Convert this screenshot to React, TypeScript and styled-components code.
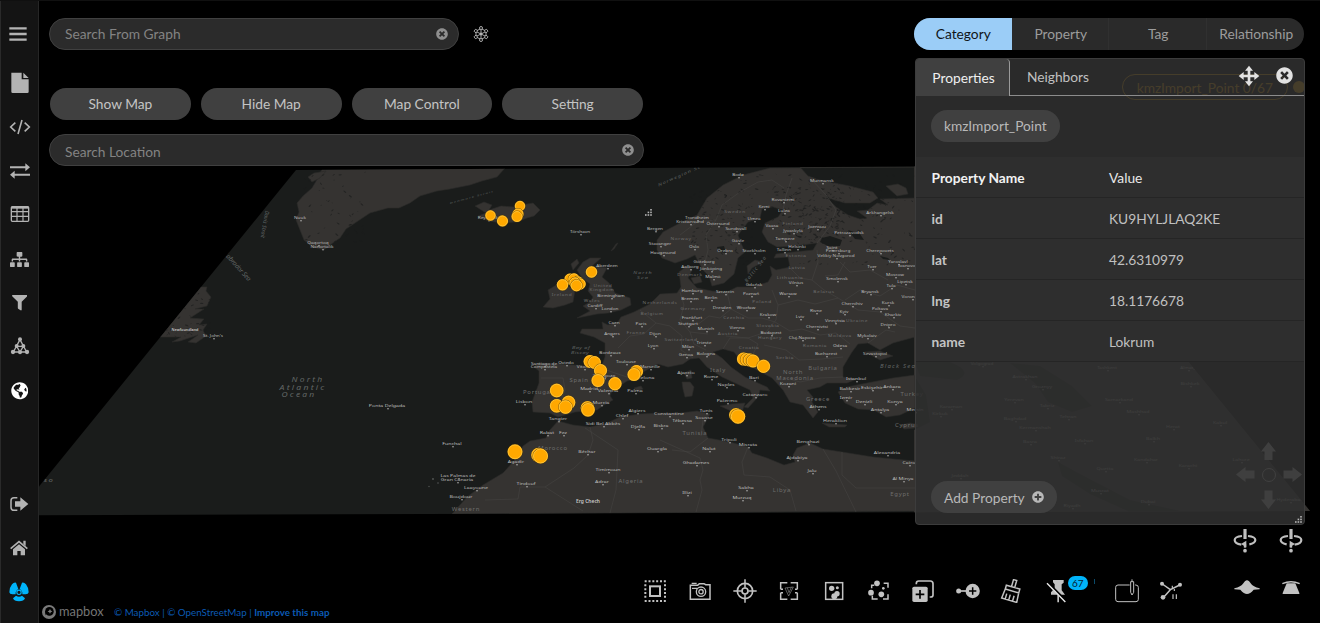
import React from 'react';
import styled, { createGlobalStyle } from 'styled-components';
import { FaSitemap, FaFilter, FaGlobeAmericas, FaTimesCircle, FaPlusCircle } from 'react-icons/fa';

const GlobalStyle = createGlobalStyle`
  * { box-sizing: border-box; }
  body { margin: 0; background: #000; font-family: Lato, 'Liberation Sans', sans-serif; font-size: 13.75px; color: #bfbfbf; overflow: hidden; }
  svg { display: block; flex: none; }
`;

const Page = styled.div`
  position: relative;
  display: flex;
  width: 1320px;
  height: 623px;
  overflow: hidden;
  background: #000;
  border-top: 1px solid #101010;
`;

const Sidebar = styled.nav`
  position: relative;
  width: 39px;
  flex: none;
  display: flex;
  flex-direction: column;
  align-items: center;
  padding: 11px 0 9px 0;
  background: #141414;
  border-left: 1px solid #2a2a2a;
  border-right: 1px solid #262626;
`;

const SideItem = styled.a<{ $color?: string; $after?: number; $shift?: number }>`
  width: 36px;
  height: 44px;
  flex: none;
  display: grid;
  place-items: center;
  color: ${p => p.$color ?? '#b3b3b3'};
  margin-bottom: ${p => p.$after ?? 0}px;
  padding-right: ${p => p.$shift ?? 0}px;
`;

const Spacer = styled.div`
  flex: 1;
`;

const Main = styled.main`
  position: relative;
  flex: 1;
  min-width: 0;
  display: flex;
  flex-direction: column;
`;

const Overlay = styled.div`
  position: relative;
  display: flex;
  justify-content: space-between;
  padding: 17px 15px 0 10px;
  height: 524px;
`;

const LeftTools = styled.div`
  width: 595px;
  display: flex;
  flex-direction: column;
`;

const SearchRow = styled.div`
  display: flex;
  align-items: center;
  gap: 10px;
`;

const SearchBox = styled.div<{ $width: number; $drop?: number }>`
  width: ${p => p.$width}px;
  height: 32px;
  display: flex;
  align-items: center;
  justify-content: space-between;
  padding: 0 ${p => (p.$drop ? 9 : 10)}px 1px 15px;
  border: 1px solid #404040;
  border-radius: 16px;
  background: #2b2b2b;
  color: #838383;

  span { padding-top: ${p => p.$drop ?? 0}px; }
`;

const ButtonRow = styled.div`
  display: grid;
  grid-template-columns: repeat(4, 1fr);
  gap: 10px;
  padding: 0 1px;
  margin: 38px 0 14px;
`;

const PillButton = styled.button`
  height: 32px;
  border: 0;
  border-radius: 16px;
  background: #404040;
  color: #c4c4c4;
  font: inherit;
  padding: 0 0 1px;
`;

const RightTools = styled.div`
  position: relative;
  width: 391px;
  display: flex;
  flex-direction: column;
  gap: 8px;
`;

const Segments = styled.div`
  display: grid;
  grid-template-columns: repeat(4, 1fr);
  width: 390px;
  height: 32px;
  border-radius: 16px;
  overflow: hidden;
  background: #2a2a2a;
`;

const Segment = styled.div<{ $active?: boolean }>`
  display: grid;
  place-items: center;
  padding-left: 2px;
  background: ${p => (p.$active ? '#9bcdf7' : 'transparent')};
  color: ${p => (p.$active ? '#101418' : '#9c9c9c')};
  border-right: 1px solid ${p => (p.$active ? '#9bcdf7' : '#303030')};
  &:last-child { border-right: 0; }
`;

const Panel = styled.section`
  position: relative;
  margin-left: 1px;
  width: 390px;
  height: 468px;
  display: flex;
  flex-direction: column;
  border: 1px solid #3c3c3c;
  border-radius: 4px;
  background: rgba(47, 47, 47, 0.895);
`;

const PanelHead = styled.div`
  display: flex;
  height: 37px;
`;

const PanelTab = styled.div<{ $active?: boolean }>`
  width: 94px;
  display: grid;
  place-items: center;
  color: ${p => (p.$active ? '#efefef' : '#c0c0c0')};
  background: ${p => (p.$active ? '#404040' : 'transparent')};
  border-right: ${p => (p.$active ? '1px solid #9a9a9a' : '0')};
  border-bottom: ${p => (p.$active ? '0' : '1px solid #8c8c8c')};
  border-radius: ${p => (p.$active ? '3px 4px 0 0' : '0')};
  padding-left: 2px;
`;

const PanelActions = styled.div`
  flex: 1;
  display: flex;
  align-items: center;
  justify-content: flex-end;
  gap: 14.5px;
  padding: 0 11.5px 2px 0;
  color: #e2e2e2;
  border-bottom: 1px solid #8c8c8c;
`;

const ChipArea = styled.div`
  height: 61px;
  padding: 14px 15px 0;
`;

const Chip = styled.span`
  display: inline-flex;
  align-items: center;
  gap: 7px;
  height: 32px;
  padding: 0 13px;
  border-radius: 16px;
  background: #404040;
  color: #b8b8b8;
`;

const PropRow = styled.div<{ $head?: boolean }>`
  display: grid;
  grid-template-columns: 177.5px 1fr;
  align-items: center;
  height: 41px;
  padding: 1px 0 0 15.5px;
  background: #2e2e2e;
  border-bottom: 1px solid #252525;
  color: ${p => (p.$head ? '#e8e8e8' : '#c0c0c0')};

  b { color: ${p => (p.$head ? '#f2f2f2' : '#c4c4c4')}; }
`;

const PanelFoot = styled.div`
  margin-top: auto;
  padding: 0 15px 11px;
`;

const Grip = styled.svg`
  position: absolute;
  right: 1px;
  bottom: 0;
`;

const Legend = styled.div`
  position: absolute;
  right: 0;
  top: 56px;
  display: flex;
  align-items: center;
  gap: 5px;
  color: #ffb300;
`;

const LegendPill = styled.div`
  height: 26px;
  padding: 0 14px;
  display: flex;
  align-items: center;
  border: 1px solid #ffb300;
  border-radius: 13px;
`;

const LegendDot = styled.i`
  width: 12px;
  height: 12px;
  border-radius: 50%;
  background: #ffb300;
`;

const Orbit = styled.div`
  position: relative;
  display: flex;
  justify-content: flex-end;
  gap: 22px;
  padding: 4px 17px 0 0;
  height: 44px;
`;

const BottomBar = styled.div`
  position: relative;
  flex: 1;
  display: flex;
  align-items: flex-start;
  justify-content: space-between;
`;

const Credits = styled.div`
  display: flex;
  align-items: center;
  padding: 35px 0 0 3px;
  font-size: 9.8px;
  color: #0b5ab4;
`;

const MapboxMark = styled.div`
  display: flex;
  align-items: center;
  gap: 3px;
  width: 72px;
  color: #757575;
  font-size: 12.8px;
  line-height: 14px;

  span { padding-bottom: 2px; }
`;

const Attribution = styled.div`
  padding-bottom: 0;
  line-height: 14px;
  white-space: nowrap;
`;

const Toolbar = styled.div`
  display: flex;
  padding-right: 6.5px;
`;

const Tool = styled.div<{ $before?: number }>`
  position: relative;
  width: 44.65px;
  height: 44px;
  display: grid;
  place-items: center;
  margin-left: ${p => p.$before ?? 0}px;
  color: #c2c2c2;
`;

const Badge = styled.span`
  position: absolute;
  left: 33px;
  top: 7px;
  width: 20px;
  height: 14px;
  display: grid;
  place-items: center;
  border-radius: 7px;
  background: #00b4fa;
  color: #06212e;
  font-size: 10px;
  line-height: 14px;
`;

const MapCanvas = styled.svg`
  position: absolute;
  left: 0;
  top: -1px;
`;

/* ---------- icons: 24px wide, drawn on a 72 unit grid around the centre ---------- */

const Icon = ({ children, size = 24 }: { children: React.ReactNode; size?: number }) => (
  <svg width={size} height={size} viewBox="-36 -36 72 72" fill="none" stroke="currentColor" strokeWidth="5">
    {children}
  </svg>
);

const MenuIcon = () => <Icon><path d="M-26-17H26M-26 0H26M-26 17H26" strokeWidth="7" /></Icon>;
const FileIcon = () => (
  <Icon><path d="M-26-31H5V-11H26V26Q26 30 22 30H-22Q-26 30-26 26ZM10-31 26-15H10Z" fill="currentColor" stroke="none" /></Icon>
);
const CodeIcon = () => <Icon><path d="M-14-13-28 0-14 13M14-13 28 0 14 13M6-21-6 21" strokeWidth="4.8" /></Icon>;
const SwapIcon = () => (
  <Icon>
    <path d="M-30-11H18M-18 11H30" strokeWidth="6" />
    <path d="M16-23 30-11 16 1ZM-16-1-30 11-16 23Z" fill="currentColor" stroke="none" />
  </Icon>
);
const TableIcon = () => (
  <Icon>
    <g transform="translate(0 -3)">
      <rect x="-26" y="-22" width="52" height="44" rx="3" strokeWidth="4" />
      <path d="M-26-19H26" strokeWidth="6" />
      <path d="M-26-7H26M-26 7H26M-9-22V22M9-22V22" strokeWidth="3.5" />
    </g>
  </Icon>
);
const MeshIcon = () => (
  <Icon>
    <g transform="translate(0 -4)">
      <path d="M0-18-20 19H20ZM-10 2H10L0 19Z" strokeWidth="4" />
      <g fill="currentColor" stroke="none">
        <circle cy="-19" r="6" /><circle cx="-21" cy="19" r="6.5" /><circle cx="21" cy="19" r="6.5" />
        <circle cy="20" r="6" /><circle cx="-10" cy="1" r="6" /><circle cx="10" cy="1" r="6" />
      </g>
    </g>
  </Icon>
);
const ExitIcon = () => (
  <Icon>
    <path d="M-5-19H-15Q-24-19-24-10V10Q-24 19-15 19H-5" strokeWidth="4.5" />
    <path d="M-12-8H4V-20L28 0 4 20V8H-12Z" fill="currentColor" stroke="none" />
  </Icon>
);
const HomeIcon = () => (
  <Icon>
    <path d="M-25 2 0-19 25 2" strokeWidth="5" />
    <path d="M13-22H20V-6L13-12ZM-18 4 0-11 18 4V22H5V9H-5V22H-18Z" fill="currentColor" stroke="none" />
  </Icon>
);
const PropellerIcon = () => (
  <Icon>
    <g fill="currentColor" stroke="none">
      <path d="M-2-9-9-28Q-15-30-21-23Q-29-13-29 1Q-28 7-20 7H-10Q-11-4-2-9Z" />
      <path d="M2-9 9-28Q15-30 21-23Q29-13 29 1Q28 7 20 7H10Q11-4 2-9Z" />
      <path d="M-9 11-18 19Q-15 28 0 28Q15 28 18 19L9 11Q0 17-9 11Z" />
    </g>
    <circle cy="1" r="6.5" strokeWidth="3.5" />
  </Icon>
);
const AtomIcon = () => (
  <Icon>
    <g strokeWidth="2.6">
      <path d="M0-13V13M-12-6 12 6M12-6-12 6" />
      <path d="M0-16 15-9V9L0 16-15 9V-9Z" />
      <circle r="3" />
      {[0, 60, 120, 180, 240, 300].map(a => <circle key={a} cy="-18" r="4.500" fill="#000" transform={`rotate(${a})`} />)}
    </g>
  </Icon>
);
const MoveIcon = () => (
  <Icon>
    <path d="M0-20V20M-20 0H20" strokeWidth="8" />
    <path d="M0-31 12-16H-12ZM0 31 12 16H-12ZM-31 0-16-12V12ZM31 0 16-12V12Z" fill="currentColor" stroke="none" />
  </Icon>
);
const SelectAllIcon = () => (
  <Icon>
    <rect x="-15" y="-14" width="30" height="29" strokeWidth="6" />
    <path d="M-31-29H34M-31 30H34" strokeWidth="6" strokeDasharray="6 5.5" />
    <path d="M-29-20V26M30-20V26" strokeWidth="6" strokeDasharray="6 5.5" />
  </Icon>
);
const CameraIcon = () => (
  <Icon>
    <path d="M-29-17H-7L-2-22H12L17-19H30V25H-29Z" strokeWidth="4.5" />
    <path d="M-25-23H-10M-24-8H-8" strokeWidth="4" />
    <circle cx="3" cy="2" r="14" strokeWidth="4" /><circle cx="3" cy="2" r="6.500" strokeWidth="4" />
  </Icon>
);
const TargetIcon = () => (
  <Icon><circle r="23" /><circle r="9" /><path d="M0-35V-10M0 35V10M-35 0H-10M35 0H10" strokeWidth="4.500" /></Icon>
);
const FrameIcon = () => (
  <Icon>
    <path d="M-5-25H-25V-5M5-25H25V-5M-5 25H-25V5M5 25H25V5M-25-5H-18M25-5H18M-25 5H-18M25 5H18" strokeWidth="4.5" />
    <path d="M-12-9 13-12-1 15ZM-5-10 0 5 7-11" strokeWidth="2" opacity=".7" />
  </Icon>
);
const ClusterIcon = () => (
  <Icon>
    <rect x="-25" y="-25" width="51" height="50" strokeWidth="4.500" />
    <g fill="currentColor" stroke="none">
      <circle cx="-7" cy="-8" r="8" /><circle cx="10" cy="-10" r="4.500" /><circle cx="9" cy="8" r="8" /><circle cx="1" cy="16" r="9" />
    </g>
  </Icon>
);
const NodesIcon = () => (
  <Icon>
    <path d="M14-23H27V-10M27 10V24H12M-4 24H-20V14M-22-8V-17H-14" strokeWidth="4.5" />
    <g fill="currentColor" stroke="none">
      <circle cx="-6" cy="-23" r="8.500" /><circle cx="-24" cy="5" r="8.500" /><circle cx="7" cy="10" r="8.500" /><circle cx="13" cy="-8" r="4" />
    </g>
  </Icon>
);
const CopyPlusIcon = () => (
  <Icon>
    <path d="M-20-20V-23Q-20-30-13-30H22Q30-30 30-22V12Q30 18 24 18H20" strokeWidth="5" />
    <rect x="-32" y="-13" width="46" height="46" rx="5" fill="currentColor" stroke="none" />
    <path d="M-9-3V23M-22 10H4" stroke="#000" strokeWidth="5" />
  </Icon>
);
const NodePlusIcon = () => (
  <Icon>
    <path d="M-28 0H0" />
    <circle cx="-28" r="7.500" fill="currentColor" stroke="none" /><circle cx="14" r="21.500" fill="currentColor" stroke="none" />
    <path d="M14-11V11M3 0H25" stroke="#000" strokeWidth="4.5" />
  </Icon>
);
const BroomIcon = () => (
  <Icon>
    <g transform="rotate(16)" strokeWidth="4.500">
      <path d="M-5-12V-34H5V-12M-21 0V-12H21V0ZM-21 0-24 29H23L21 0M-13 29V12M-2 29V12M10 29V12" />
    </g>
  </Icon>
);
const PinOffIcon = () => (
  <Icon>
    <path d="M-12-33H20V-25L14-20V-2L24 11H-18V4L-7-8V-20L-12-26ZM1 11H6V34H1Z" fill="currentColor" stroke="none" />
    <path d="M-27-24 29 33" stroke="#000" strokeWidth="8" />
    <path d="M-30-23 25 33" stroke="#eee" strokeWidth="4" />
  </Icon>
);
const TabletIcon = () => (
  <Icon>
    <path d="M8-18H-27Q-34-18-34-11V25Q-34 32-27 32H27Q34 32 34 25V-11Q34-18 26-18H24" strokeWidth="3" />
    <path d="M11-28H20V4L15 12 11 4ZM15-35V-28" strokeWidth="3" />
  </Icon>
);
const BranchIcon = () => (
  <Icon>
    <path d="M-26-21-2-4 26-18M-2-4-22 19" strokeWidth="4.5" />
    <path d="M4-16V-8M10-6V0M6 10V24M16 10V24" strokeWidth="3.5" />
    <g fill="currentColor" stroke="none"><circle cx="-27" cy="-22" r="6" /><circle cx="27" cy="-19" r="6" /><circle cx="-24" cy="19" r="7" /></g>
  </Icon>
);
const OrbitIcon = ({ flip }: { flip?: boolean }) => (
  <Icon>
    <g transform={flip ? 'scale(-1 1)' : undefined}>
      <path d="M0-36V-6" strokeWidth="9.5" />
      <path d="M-9-15Q-31-13-31-3Q-31 8-11 11M9-15Q31-13 31-3Q31 6 13 10" strokeWidth="6.500" />
      <path d="M4-1-12 9 4 19Z" fill="currentColor" stroke="none" />
      <path d="M0 8V20" strokeWidth="7" />
      <circle cy="29" r="5.500" fill="currentColor" stroke="none" />
    </g>
  </Icon>
);
const TiltLowIcon = () => (
  <svg width="26" height="24" viewBox="-39 -36 78 72"><path d="M-38-8Q-18-12-11-23Q-5-33 0-32Q5-33 11-23Q18-12 38-8V-5L20-4Q9 9 0 9Q-9 9-20-4L-38-5Z" fill="currentColor" /></svg>
);
const TiltHighIcon = () => (
  <Icon><path d="M-26-22Q0-33 26-22" strokeWidth="4.500" /><path d="M-13-23H13L25 6V9H-25V6Z" fill="currentColor" stroke="none" /></Icon>
);

const MapboxLogo = () => (
  <svg width="14" height="14" viewBox="0 0 14 14">
    <circle cx="7" cy="7" r="7" fill="#7a7a7a" />
    <circle cx="7.400" cy="6.400" r="4.300" fill="#000" />
    <path d="M3.400 10.600V6.500L7 3Z" fill="#000" />
    <path d="M8 4l.8 1.600 1.600.8-1.600.8L8 8.800l-.8-1.600-1.600-.8 1.600-.8Z" fill="#7a7a7a" />
  </svg>
);

/* ---------- map ---------- */

const LAND = [
  // Newfoundland
  'M200 287 207 287 206 291 211 297 207 306 195 309 204 309 190 318 204 319 199 325 207 324 203 330 206 336 196 343 188 342 198 335 180 341 172 342 181 337 160 337Z',
  // Greenland
  'M322 169 318 178 312 188 303 196 297 203 299 212 296 220 300 230 304 240 313 247 324 250 334 242 340 238 346 229 358 221 370 213 388 208 399 208 410 203 420 196 437 191 450 189 470 185 482 181 497 177 506 167Z',
  'M308 177 314 173 326 171 320 178 312 182Z',
  // Iceland
  'M475 206 484 202 492 205 489 210 501 206 514 207 521 205 533 203 540 210 534 216 527 218 517 222 502 223 488 221 478 216 486 213Z',
  // Great Britain, Ireland
  'M583 262 590 258 601 258 592 266 607 268 602 277 609 283 615 293 630 298 631 305 621 310 608 313 597 314 577 318 590 311 583 306 590 302 593 297 588 291 590 284 582 278 577 270Z',
  'M548 290 558 284 568 286 575 290 573 302 565 305 553 308 543 307 550 299Z',
  'M571 264 577 259 579 263 573 270Z', 'M611 251 616 244 618 243 614 249Z',
  // Scandinavia, Europe
  'M915 167 800 167 808 176 820 180 850 186 873 192 878 198 870 203 845 203 827 198 836 207 848 215 860 219 867 218 857 211 868 210 877 203 888 205 880 199 915 198 915 337 893 343 880 350 868 343 858 344 852 352 843 367 843 377 857 379 847 383 827 383 820 387 807 390 813 397 812 402 818 412 813 418 803 405 790 402 783 390 772 378 757 370 741 361 734 352 723 349 713 352 722 358 731 367 745 377 767 387 770 391 760 390 758 397 748 408 744 407 753 398 750 390 735 383 722 377 707 367 699 358 690 359 683 364 668 367 658 364 643 372 640 378 627 381 612 391 610 396 613 400 604 405 597 410 575 412 565 415 558 417 550 413 533 412 532 402 539 383 539 371 534 367 538 363 560 364 587 366 602 365 605 357 605 343 594 337 580 333 582 329 603 329 602 322 608 325 618 322 621 317 634 312 650 304 660 294 677 293 681 287 679 272 687 266 692 270 688 278 697 288 712 291 727 292 737 287 753 287 768 282 772 275 770 266 776 270 790 267 788 257 774 258 776 254 793 252 813 250 817 243 795 246 777 247 768 242 762 232 765 223 778 217 783 210 773 207 762 209 760 218 748 222 738 235 741 243 745 252 738 258 734 274 724 283 712 286 709 276 703 270 698 261 695 255 687 259 675 263 662 258 657 250 657 240 663 232 680 223 697 215 707 198 723 185 743 175 770 168Z',
  'M886 186 898 184 906 188 908 194 897 196Z',
  'M747 266 755 260 763 262 752 268 748 274Z',
  'M691 278 700 276 702 282 694 284Z',
  // Crimea, Turkey
  'M865 352 880 351 893 356 880 360Z',
  'M838 392 847 387 862 384 893 378 915 375 915 408 900 415 886 417 874 410 858 409 845 403Z',
  // Islands
  'M682 382 690 382 694 387 692 396 685 397 683 389Z', 'M684 373 691 370 692 378 687 379Z',
  'M720 406 732 404 745 403 742 412 731 411Z',
  'M822 423 834 424 847 425 845 427 829 427Z', 'M901 425 910 423 915 424 915 428 904 429Z',
  'M634 388 641 386 643 389 637 391Z',
  // Africa
  'M558 421 549 431 546 438 530 441 523 446 514 461 503 473 483 485 467 497 452 514 915 511 915 461 893 459 873 457 842 452 823 449 810 443 797 448 793 455 795 462 784 465 767 458 752 453 748 447 730 442 708 438 703 427 710 414 697 411 680 413 660 413 640 414 620 417 605 424 590 427 573 425Z',
];

const LAKES = [
  'M822 238 830 236 842 240 840 246 828 246 820 242Z', 'M848 230 860 234 864 240 855 239Z',
  'M717 247 724 246 726 253 719 252Z', 'M880 256 888 258 890 260 883 259Z',
];

const LINES = [
  'M590 427 593 440 588 455 574 468 545 487 520 487 518 499 485 500', 'M545 487 583 511', 'M585 428 618 450 616 490 610 513',
  'M660 440 700 458 703 470 700 480 702 490 696 512', 'M708 438 690 452 672 450', 'M748 447 742 462 744 475 770 477 790 490 796 511',
  'M823 449 836 471 856 512', 'M842 452 842 475 856 488H915', 'M703 420 701 436', 'M557 410 565 390 563 378 541 378',
  'M596 366 612 372 630 378', 'M640 310 656 323 670 326 682 336 681 350 693 358', 'M680 292 684 305 680 320 690 332 708 334',
  'M727 292 731 309 720 318 709 316 697 325', 'M731 309 748 318 762 318 775 322', 'M772 290 778 305 776 320 766 332 748 338 726 336',
  'M723 349 730 338 748 338 758 344 752 356 764 366', 'M775 322 790 331 802 329 820 335 836 333 850 344', 'M764 345 786 350 799 360 822 359 843 357',
  'M778 305 798 300 815 304 838 298 858 310 880 312 900 326 915 328', 'M790 268 800 278 812 280 824 290 838 298', 'M817 250 818 262 812 280',
  'M703 270 708 250 706 235 716 220 722 205 740 192 758 182 772 180 784 188', 'M783 210 786 195 792 178', 'M817 243 830 226 836 210 826 195 812 180',
  'M786 378 800 382 820 378 843 377', 'M868 343 886 330 895 332', 'M845 300 860 290 880 296 897 285 915 290', 'M840 262 850 272 870 270 888 280',
  'M656 323 644 334 630 336 618 348', 'M690 332 694 344 706 350', 'M845 262 838 275 825 276', 'M680 235 697 222 716 220',
];

type Label = [string, number, number];

const CITIES: Label[] = [
  ['Reykjavík', 488, 219], ['Tórshavn', 580, 233], ['Bergen', 655, 230], ['Stavanger', 660, 245], ['Haugesund', 663, 254], ['Aberdeen', 607, 267],
  ['Birmingham', 611, 297], ['Cardiff', 595, 307], ['London', 610, 310], ['Caen', 614, 324], ['Paris', 641, 325], ['Angers', 612, 335],
  ['Dijon', 655, 335], ['Lyon', 653, 347], ['Bordeaux', 610, 354], ['Toulouse', 626, 363], ['Marseille', 650, 368], ['Barcelona', 642, 379],
  ['Santiago de', 544, 365], ['Compostela', 544, 368], ['Oviedo', 566, 364], ['Vitoria', 584, 368], ['Zaragoza', 604, 377], ['Madrid', 589, 390],
  ['Valencia', 608, 392], ['Palma', 635, 392], ['Lisbon', 524, 403], ['Murcia', 601, 404], ['Tangier', 558, 420], ['Rabat', 547, 434],
  ['Fez', 563, 434], ['Sidi Bel Abbès', 603, 425], ['Chlef', 622, 417], ['Algiers', 637, 412], ['Constantine', 669, 415], ['Tébessa', 682, 422],
  ['Djelfa', 638, 428], ['Biskra', 661, 427], ['Béchar', 587, 453], ['Ouargla', 657, 450], ['Funchal', 452, 445], ['Agadir', 516, 463],
  ['Tindouf', 526, 485], ['Timimoun', 608, 471], ['Adrar', 602, 483], ['Las Palmas de', 458, 477], ['Gran Canaria', 457, 481], ['Laayoune', 476, 489],
  ['Boujdour', 461, 498], ['Oslo', 694, 248], ['Göteborg', 704, 263], ['Aalborg', 690, 268], ['Jönköping', 711, 270], ['Malmö', 713, 278],
  ['Örebro', 725, 252], ['Stockholm', 754, 252], ['Trondheim', 697, 219], ['Kristiansund', 690, 223], ['Östersund', 718, 225], ['Bodø', 738, 176],
  ['Kemi', 764, 208], ['Rovaniemi', 783, 201], ['Murmansk', 822, 182], ['Luleå', 784, 212], ['Umeå', 754, 220], ['Sundsvall', 736, 230],
  ['Gävle', 738, 242], ['Vaasa', 772, 227], ['Jyväskylä', 793, 232], ['Tampere', 785, 240], ['Joensuu', 817, 228],
  ['Helsinki', 797, 248], ['Tallinn', 784, 251], ['Saint', 832, 249], ['Petersburg', 838, 252], ['Petrozavodsk', 849, 234], ['Arkhangelsk', 880, 214],
  ['Cherepovets', 880, 252], ['Velikiy Novgorod', 836, 257], ['Moscow', 895, 276], ['Tver', 872, 268], ['Yaroslavl', 898, 263], ['Ivanovo', 907, 267],
  ['Smolensk', 837, 280], ['Vilnius', 796, 284], ['Gdańsk', 754, 286], ['Hamburg', 692, 292], ['Bremen', 690, 300], ['Berlin', 711, 299],
  ['Szczecin', 725, 293], ['Poznań', 751, 295], ['Warsaw', 788, 295], ['Wrocław', 746, 309], ['Dresden', 722, 309], ['Frankfurt', 692, 319],
  ['Stuttgart', 688, 325], ['Munich', 706, 330], ['Vienna', 737, 329], ['Krakow', 768, 316], ['Lviv', 800, 318], ['Rivne', 816, 312],
  ['Kyiv', 844, 313], ['Vinnytsia', 835, 322], ['Chernivtsi', 817, 328], ['Chernihiv', 852, 305], ['Kharkiv', 893, 316], ['Kursk', 888, 304],
  ['Bryansk', 870, 293], ['Tula', 891, 287], ['Poltava', 880, 310], ['Dnipro', 888, 326], ['Mykolaiv', 867, 337], ['Odesa', 840, 347],
  ['Cluj-Napoca', 802, 339], ['Budapest', 771, 334], ['Trieste', 704, 344], ['Milan', 688, 348], ['Genoa', 686, 356], ['Bologna', 706, 355],
  ['Ajaccio', 686, 374], ['Rome', 711, 378], ['Naples', 726, 386], ['Bari', 754, 379], ['Catanzaro', 755, 396], ['Palermo', 727, 402],
  ['Tunis', 706, 412], ['Sousse', 704, 419], ['Nalut', 709, 450], ['Tripoli', 729, 441], ['Misrata', 748, 446], ['Ghadames', 696, 464],
  ['Benghazi', 808, 443], ['Ajdabiya', 797, 459], ['Jalu', 812, 472], ['Sabha', 746, 489], ['Murzuq', 742, 499], ['Illizi', 687, 494],
  ['Alexandria', 887, 454], ['Cairo', 909, 464], ['Al Minya', 903, 480], ['Heraklion', 835, 422], ['Athens', 818, 408], ['Bucharest', 826, 355],
  ['Sevastopol', 875, 355], ['Istanbul', 856, 380], ['Balıkesir', 850, 390], ['Eskişehir', 872, 389], ['Ankara', 892, 388], ['Izmir', 846, 399],
  ['Denizli', 864, 403], ['Konya', 895, 403], ['Antalya', 880, 411], ['Kozani', 788, 385], ['Mersin', 915, 411], ["St. John's", 213, 337],
  ['Qaqortoq', 318, 244], ['Nanortalik', 322, 248], ['Nuuk', 300, 219], ['Ponta Delgada', 387, 407],
  ['Lipetsk', 905, 283], ['Voronezh', 912, 298],
  // far side of the map, seen through the panel
  ['Volgograd', 982, 365], ['Astrakhan', 1025, 378], ['Groznyy', 1042, 388], ['Yerevan', 1014, 401], ['Tabriz', 1047, 407], ['Karaman', 951, 408],
  ['Kirkuk', 940, 415], ['Kermanshah', 1035, 429], ['Baghdad', 1015, 420], ['Tehran', 1068, 418], ['Isfahan', 1084, 442], ['Samarkand', 1119, 401],
  ['Mashhad', 1138, 413], ['Herat', 1173, 428], ['Kabul', 1220, 424], ['Quetta', 1105, 470], ['Kandahar', 1146, 461], ['Karachi', 1188, 467],
  ['Lahore', 1241, 461], ['Dubai', 1148, 503], ['Muscat', 1100, 492], ['Riyadh', 1072, 507], ['Jeddah', 960, 477], ['Shiraz', 1058, 459],
  ['Hyderabad', 1290, 501], ['Tashkent', 1107, 369], ['Almaty', 1188, 369], ['Bishkek', 1190, 385], ['Basra', 1030, 443], ['Balkh', 1153, 440],
];

const REGIONS: Label[] = [
  ['Ireland', 562, 296], ['United', 603, 286.5], ['Kingdom', 602, 291], ['Wales', 592, 302], ['France', 636, 334], ['Spain', 579, 382],
  ['Portugal', 538, 394], ['Morocco', 553, 450], ['Algeria', 631, 483], ['Tunisia', 695, 435], ['Libya', 782, 492], ['Egypt', 900, 496],
  ['Germany', 693, 310], ['Poland', 762, 303], ['Belarus', 824, 293], ['Ukraine', 857, 322], ['Hungary', 770, 338.5], ['Romania', 815, 347],
  ['Bulgaria', 823, 370], ['Greece', 818, 401], ['Serbia', 785, 359], ['Italy', 718, 372], ['Croatia', 749, 349], ['Netherlands', 660, 304],
  ['Belgium', 652, 315], ['Switzerland', 681, 341], ['Austria', 728, 335], ['Norway', 681, 240], ['Sweden', 735, 213], ['Estonia', 796, 257],
  ['Latvia', 797, 269], ['Lithuania', 790, 279], ['Western', 466, 511], ['Turkey', 912, 396], ['North', 793, 374], ['Macedonia', 795, 380],
  ['Cyprus', 907, 427], ['Denmark', 690, 276], ['Moldova', 840, 337], ['Slovakia', 768, 327], ['Czechia', 734, 319], ['Finland', 793, 225],
];

const NODES: [number, number, number][] = [
  [490.5, 215.5, 5], [520, 206, 5], [518, 214, 5.3], [517, 216.5, 5.3], [502, 219.5, 4], [502.5, 221, 5.3],
  [591.5, 272, 5.5], [570, 279, 5.3], [574, 279, 5.5], [578, 282, 5.5], [580, 284, 5.5], [575, 283, 5.5], [576.5, 285.5, 5.6], [562.5, 284.8, 5.5],
  [590, 361.5, 6.2], [594.5, 362.5, 6.2], [600.5, 370.5, 6.3], [598, 380.5, 6.3], [615, 383.7, 6.4], [636.5, 371.5, 6.3], [634, 374.5, 6.3],
  [556.7, 390.5, 6.6], [568.5, 402.5, 6.6], [556.7, 405.8, 6.6], [565.5, 407, 6.6], [587.5, 408, 6.6], [588, 409.8, 6.6],
  [515, 451.8, 7.2], [538.5, 455, 7], [540.5, 456, 7.3],
  [743.5, 359, 6.3], [747, 359.5, 6.3], [750, 360, 6.3], [753, 361, 6.3], [763.5, 366.3, 6.4],
  [736, 415, 6.6], [738, 416.5, 7],
];

const scatter = (count: number, x: number, y: number, w: number, h: number, seed: number) => {
  let s = seed;
  const next = () => (s = (s * 16807) % 2147483647) / 2147483647;
  return Array.from({ length: count }, () => [x + next() * w, y + next() * h, 0.5 + next() * 1.5, next() * 180 - 90]);
};

const PONDS = [
  ...scatter(190, 772, 188, 72, 56, 71), ...scatter(120, 690, 190, 65, 75, 913), ...scatter(120, 800, 175, 115, 90, 4242),
  ...scatter(50, 305, 172, 60, 70, 55), ...scatter(60, 165, 290, 45, 50, 812), ...scatter(14, 730, 170, 60, 25, 99),
];

const WorldMap = () => (
  <MapCanvas width="1281" height="623" viewBox="39 0 1281 623" fontFamily="'Noto Sans', sans-serif">
    <defs>
      <clipPath id="sheet"><path d="M296 170 915 166.500 1029 166 1310 511 39 515.300V486.500Z" /></clipPath>
    </defs>
    <g clipPath="url(#sheet)">
      <rect x="39" y="160" width="1281" height="360" fill="#1a1c1b" />
      <g fill="#353331" stroke="#2c2b2a" strokeWidth=".6">
        {LAND.map((d, i) => <path key={i} d={d} />)}
        <path d="M914 166H1035L1320 515H914V430L930 422 926 395 914 375Z" stroke="none" />
      </g>
      <g fill="#1a1c1b">
        {LAKES.map((d, i) => <path key={i} d={d} />)}
        <path d="M915 362H950Q975 372 957 380L920 376ZM1010 363 1040 366 1072 386 1092 406 1072 412 1048 402 1036 384ZM1058 462 1080 474 1130 500 1185 512H1130L1090 494 1062 476Z" />
        {PONDS.map(([x, y, r, a], i) => (
          <ellipse key={i} cx={x} cy={y} rx={r} ry={r * 0.35} opacity=".65" transform={`rotate(${a * 0.6} ${x} ${y})`} />
        ))}
      </g>
      <g fill="none" stroke="#454341" strokeWidth=".6">{LINES.map((d, i) => <path key={i} d={d} />)}</g>
      <g fill="#6e6e6d" fontSize="5.5" textAnchor="middle" letterSpacing=".7">
        {REGIONS.map(([t, x, y]) => <text key={t} transform={`translate(${x} ${y}) scale(${y > 365 ? 1.08 : 0.88} ${y > 365 ? 0.88 : 0.62})`}>{t}</text>)}
      </g>
      <g fill="#bcbcbb" fontSize="4.8" textAnchor="middle">
        {CITIES.map(([t, x, y], i) => (
          <g key={i}>
            <text transform={`translate(${x} ${y}) scale(${y > 370 ? 1.1 : 0.98} ${y > 370 ? 0.85 : 0.62})`}>{t}</text>
            <circle cx={x + 1} cy={y + 1.8} r=".75" />
          </g>
        ))}
      </g>
      <g fill="#626766" fontSize="8.5" fontStyle="italic" letterSpacing="2.2" textAnchor="middle">
        <text transform="translate(308 382) scale(1 .76)">North</text>
        <text transform="translate(303 389.5) scale(1.02 .76)">Atlantic</text>
        <text transform="translate(299 397) scale(1 .76)">Ocean</text>
        <g fontSize="5.5" letterSpacing="1.1">
          <text transform="translate(643 274) scale(1 .7)">North</text>
          <text transform="translate(643 278.500) scale(1 .7)">Sea</text>
          <text transform="translate(581 349) scale(1 .7)" letterSpacing=".5">Bay of</text>
          <text transform="translate(580 353.500) scale(1 .7)" letterSpacing=".5">Biscay</text>
          <text transform="translate(898 367.5) scale(1.1 .8)">Black Sea</text>
          <text transform="translate(757 270) rotate(-52)" fontSize="5">Baltic Sea</text>
          <text transform="translate(682 176) rotate(-24) scale(1 .7)">Norwegian Sea</text>
          <text transform="translate(472 198) rotate(-15) scale(1 .5)" fontSize="4.5">Denmark Strait</text>
          <text transform="translate(263 224) rotate(100)" letterSpacing="0">Davis Strait</text>
          <text transform="translate(236 268) rotate(48)" fontSize="6.5" letterSpacing="-.2">Labrador Sea</text>
          <text transform="translate(49 482) scale(1.4 .9)">so</text>
        </g>
      </g>
      <g fontSize="5.5" fontWeight="600" fill="#c9c9c8" textAnchor="middle">
        <text transform="translate(588 503) scale(.9 .85)">Erg Chech</text>
        <text transform="translate(185 330.5) scale(.75 .55)" fontSize="5">Newfoundland</text>
      </g>
      <g fill="#555857"><circle cx="433" cy="479" r=".9" /><circle cx="438" cy="483" r=".8" /><circle cx="429" cy="486.5" r=".7" /></g>
    </g>
    <g fill="#ffa800" stroke="#ffc63a" strokeWidth=".9">
      {NODES.map(([x, y, r], i) => (
        <g key={i}><circle cx={x} cy={y} r={r + 0.3} stroke="#40300b" strokeWidth=".5" /><circle cx={x} cy={y} r={r - 0.3} /></g>
      ))}
    </g>
    <GripDots x={645} y={209} />
    <g fill="#c8c8c8">
      <path d="M1268.500 442 1276 451.500H1272.500V460H1264.500V451.500H1261ZM1268.500 509 1276 499.500H1272.500V490.500H1264.500V499.500H1261ZM1236 474.500 1245.500 467V470.500H1254.500V478.500H1245.500V482ZM1302 474.500 1292.500 467V470.500H1283.500V478.500H1292.500V482Z" />
      <circle cx="1269" cy="475" r="6.5" fill="none" stroke="#c8c8c8" />
    </g>
    <path d="M1094.500 579V584" stroke="#0b4a68" />
  </MapCanvas>
);

const GripDots = ({ x, y }: { x: number; y: number }) => (
  <g fill="#b5b5b5">
    {[[2, 0], [2, 1], [1, 1], [0, 2], [1, 2], [2, 2]].map(([c, r], i) => (
      <rect key={i} x={x + c * 2.6} y={y + r * 2.6} width="1.6" height="1.6" />
    ))}
  </g>
);

const PROPS = [
  ['id', 'KU9HYLJLAQ2KE'],
  ['lat', '42.6310979'],
  ['lng', '18.1176678'],
  ['name', 'Lokrum'],
];

export default function App() {
  return (
    <>
      <GlobalStyle />
      <Page>
        <Sidebar>
          <SideItem $after={5} $shift={3}><MenuIcon /></SideItem>
          <SideItem><FileIcon /></SideItem>
          <SideItem><CodeIcon /></SideItem>
          <SideItem><SwapIcon /></SideItem>
          <SideItem><TableIcon /></SideItem>
          <SideItem><FaSitemap size={19} /></SideItem>
          <SideItem><FaFilter size={15.5} /></SideItem>
          <SideItem><MeshIcon /></SideItem>
          <SideItem $color="#fff"><FaGlobeAmericas size={17.5} /></SideItem>
          <Spacer />
          <SideItem $shift={2}><ExitIcon /></SideItem>
          <SideItem $shift={1}><HomeIcon /></SideItem>
          <SideItem $color="#00b4fa" $shift={1}><PropellerIcon /></SideItem>
        </Sidebar>
        <Main>
          <WorldMap />
          <Overlay>
            <LeftTools>
              <SearchRow>
                <SearchBox $width={410}><span>Search From Graph</span><FaTimesCircle size={12} color="#8f8f8f" /></SearchBox>
                <AtomIcon />
              </SearchRow>
              <ButtonRow>
                {['Show Map', 'Hide Map', 'Map Control', 'Setting'].map(t => <PillButton key={t}>{t}</PillButton>)}
              </ButtonRow>
              <SearchBox $width={595} $drop={4}><span>Search Location</span><FaTimesCircle size={12} color="#8f8f8f" /></SearchBox>
            </LeftTools>
            <RightTools>
              <Segments>
                {['Category', 'Property', 'Tag', 'Relationship'].map((t, i) => <Segment key={t} $active={i === 0}>{t}</Segment>)}
              </Segments>
              <Legend><LegendPill>kmzImport_Point 0/67</LegendPill><LegendDot /></Legend>
              <Panel>
                <PanelHead>
                  <PanelTab $active>Properties</PanelTab>
                  <PanelTab>Neighbors</PanelTab>
                  <PanelActions><MoveIcon /><FaTimesCircle size={17} /></PanelActions>
                </PanelHead>
                <ChipArea><Chip>kmzImport_Point</Chip></ChipArea>
                <PropRow $head><b>Property Name</b><span>Value</span></PropRow>
                {PROPS.map(([k, v]) => <PropRow key={k}><b>{k}</b><span>{v}</span></PropRow>)}
                <PanelFoot><Chip>Add Property <FaPlusCircle size={12} /></Chip></PanelFoot>
                <Grip width="8" height="8"><GripDots x={0} y={0} /></Grip>
              </Panel>
            </RightTools>
          </Overlay>
          <Orbit><OrbitIcon /><OrbitIcon flip /></Orbit>
          <BottomBar>
            <Credits>
              <MapboxMark><MapboxLogo /><span>mapbox</span></MapboxMark>
              <Attribution>© Mapbox | © OpenStreetMap | <b>Improve this map</b></Attribution>
            </Credits>
            <Toolbar>
              <Tool><SelectAllIcon /></Tool>
              <Tool><CameraIcon /></Tool>
              <Tool><TargetIcon /></Tool>
              <Tool><FrameIcon /></Tool>
              <Tool><ClusterIcon /></Tool>
              <Tool><NodesIcon /></Tool>
              <Tool><CopyPlusIcon /></Tool>
              <Tool><NodePlusIcon /></Tool>
              <Tool><BroomIcon /></Tool>
              <Tool><PinOffIcon /><Badge>67</Badge></Tool>
              <Tool $before={25}><TabletIcon /></Tool>
              <Tool><BranchIcon /></Tool>
              <Tool $before={30.5}><TiltLowIcon /></Tool>
              <Tool><TiltHighIcon /></Tool>
            </Toolbar>
          </BottomBar>
        </Main>
      </Page>
    </>
  );
}
